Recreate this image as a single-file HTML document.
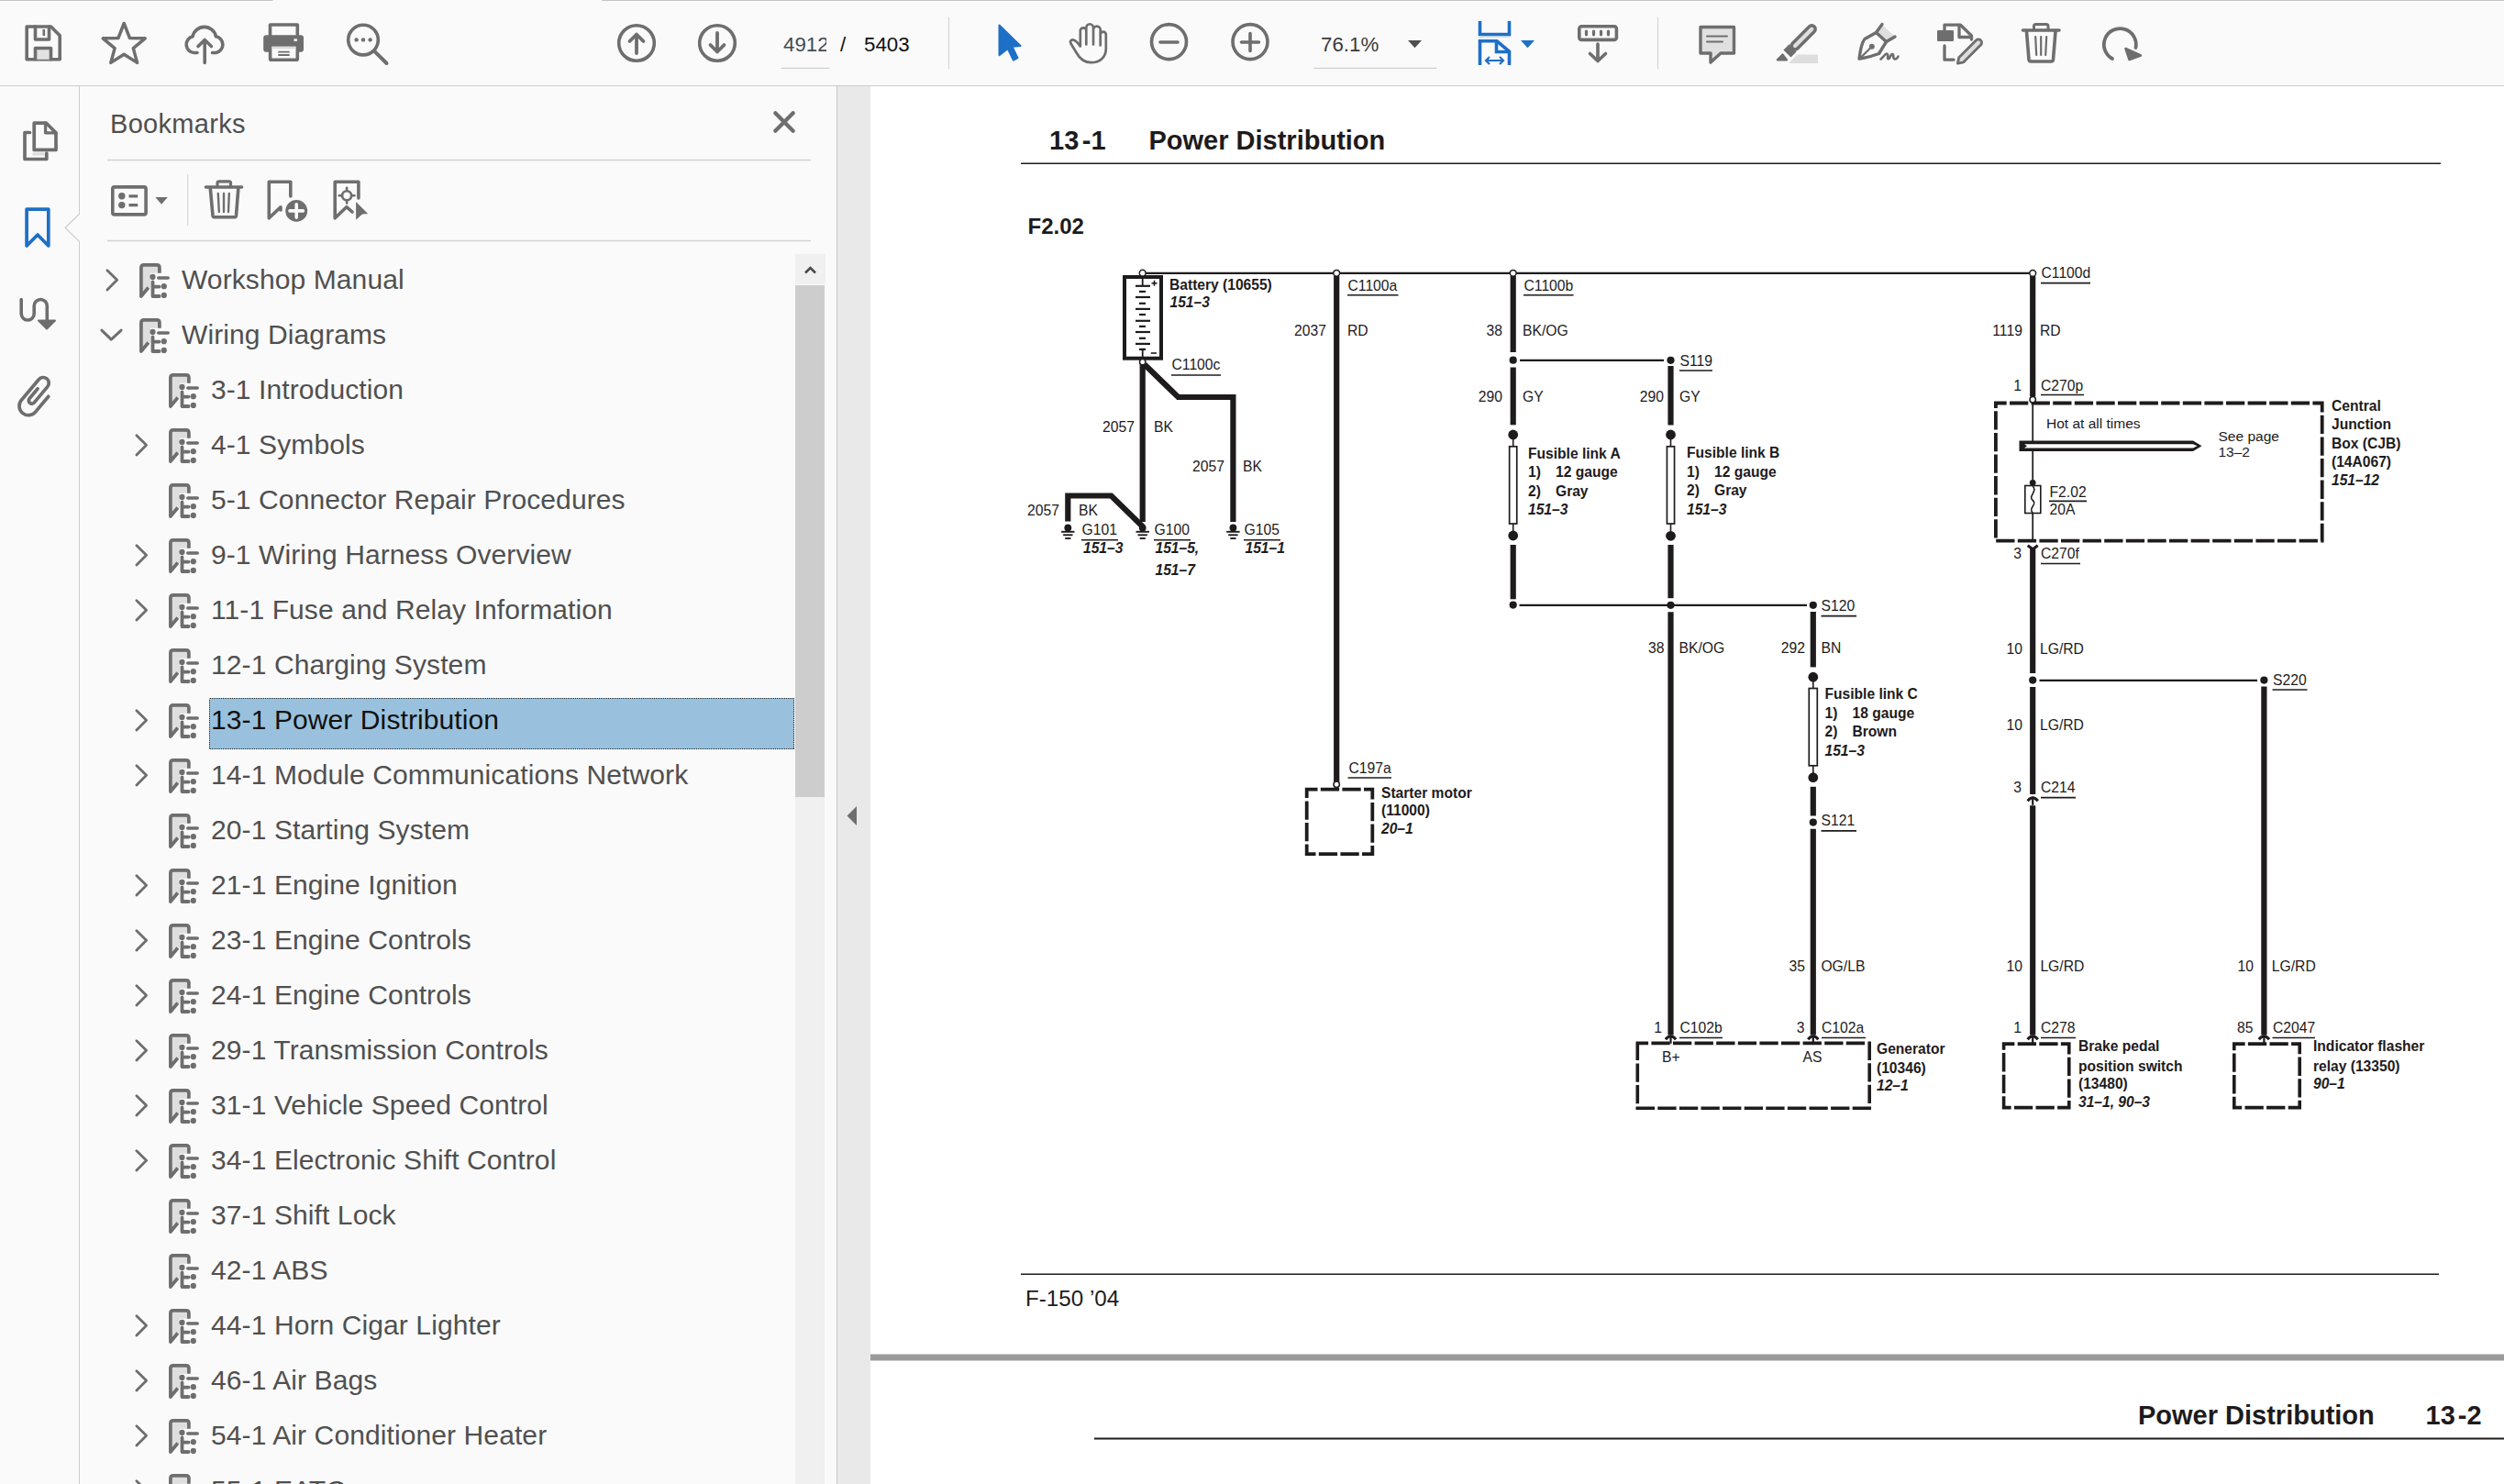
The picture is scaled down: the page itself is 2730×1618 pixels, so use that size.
<!DOCTYPE html>
<html><head><meta charset="utf-8">
<style>
html,body{margin:0;padding:0}
body{width:2730px;height:1618px;overflow:hidden;position:relative;background:#fff;font-family:"Liberation Sans",sans-serif}
.abs{position:absolute}
#tb{left:0;top:0;width:2730px;height:93px;background:#fafafa}
#tbline{left:0;top:93px;width:2730px;height:1px;background:#cdcdcd}
#rail{left:0;top:94px;width:86px;height:1524px;background:#fafafa}
#railb{left:86px;top:94px;width:1px;height:1524px;background:#cdcdcd}
#panel{left:87px;top:94px;width:825px;height:1524px;background:#fafafa;overflow:hidden}
#panelb{left:912px;top:94px;width:1px;height:1524px;background:#c9c9c9}
#gutter{left:913px;top:94px;width:36px;height:1524px;background:#e9e9e9}
.bm{position:absolute;font-size:29.5px;color:#4d4d4d;white-space:nowrap;line-height:1}
svg{position:absolute;left:0;top:0;overflow:visible}
</style></head>
<body>
<div id="tb" class="abs"></div>
<div id="tbline" class="abs"></div>
<div id="rail" class="abs"></div>
<div id="railb" class="abs"></div>
<div id="panel" class="abs"></div>
<div id="panelb" class="abs"></div>
<div id="gutter" class="abs"></div>
<svg width="2730" height="94" style="left:0;top:0">
<g fill="none" stroke="#6e6e6e" stroke-width="3.6" stroke-linejoin="round" stroke-linecap="round">
<!-- top window line -->
<line x1="0" y1="0.5" x2="297" y2="0.5" stroke="#c4c4c4" stroke-width="1.2"/>
<line x1="657" y1="0.5" x2="2730" y2="0.5" stroke="#c4c4c4" stroke-width="1.2"/>
<!-- save -->
<path d="M29.2,29 H55.5 L65.2,38.8 V64.8 H29.2 Z"/>
<path d="M38.5,29 V43 H53.5 V29" />
<rect x="46.5" y="32" width="2.6" height="7" fill="#6e6e6e" stroke="none"/>
<path d="M38.5,64.8 V52.5 H55.5 V64.8" fill="#e2e2e2"/>
<!-- star -->
<path d="M135.2,25.5 L141.5,41.6 L158.2,41.8 L145.3,52.6 L149.6,68.4 L135.2,59.2 L120.8,68.4 L125.1,52.6 L112.2,41.8 L128.9,41.6 Z" stroke-width="3.5"/>
<!-- cloud -->
<path d="M215,57.5 H211.5 A9,9 0 0 1 210,39.8 A13,13 0 0 1 235.5,39.8 A9,9 0 0 1 235.5,57.5 H231.5"/>
<path d="M223.2,68.5 V44 M216,50.5 L223.2,43.5 L230.4,50.5"/>
<!-- printer -->
<path d="M294.5,38 V27 H324.3 V38"/>
<rect x="287.2" y="38.2" width="43.8" height="18.6" rx="3" fill="#6e6e6e" stroke="none"/>
<rect x="320.5" y="42.3" width="3.4" height="2.6" fill="#fafafa" stroke="none"/>
<rect x="294.6" y="49" width="29.7" height="16.3" rx="1" fill="#fafafa"/>
<rect x="296.4" y="50.8" width="26.1" height="2.5" fill="#dcdcdc" stroke="none"/>
<path d="M304,56.7 H315 M304,60 H315" stroke-width="1.8"/>
<!-- search -->
<circle cx="396" cy="43.6" r="16.3"/>
<path d="M408,55.6 L421.5,69" stroke-width="4"/>
<circle cx="388.6" cy="43.4" r="2.2" fill="#6e6e6e" stroke="none"/>
<circle cx="396" cy="43.4" r="2.2" fill="#6e6e6e" stroke="none"/>
<circle cx="403.6" cy="43.4" r="2.2" fill="#6e6e6e" stroke="none"/>
<!-- up/down -->
<circle cx="694" cy="47" r="19.3"/>
<path d="M694,58 V37.5 M686.5,45 L694,37.5 L701.5,45" stroke-width="3.8"/>
<circle cx="782" cy="47" r="19.3"/>
<path d="M782,36 V56.5 M774.5,49 L782,56.5 L789.5,49" stroke-width="3.8"/>
<!-- separators -->
<line x1="1034.5" y1="19" x2="1034.5" y2="75" stroke="#d6d6d6" stroke-width="1.2"/>
<line x1="1807.5" y1="19" x2="1807.5" y2="75" stroke="#d6d6d6" stroke-width="1.2"/>
<!-- page field underline -->
<line x1="852" y1="74.3" x2="904" y2="74.3" stroke="#cfcfcf" stroke-width="1.2"/>
<line x1="1433" y1="74.3" x2="1566" y2="74.3" stroke="#cfcfcf" stroke-width="1.2"/>
<!-- select arrow -->
<path d="M1089.5,27.5 L1112.5,50 L1103.5,50.8 L1109.5,63.2 L1104.8,65.5 L1098.8,53 L1089.5,60.2 Z" fill="#1e6fc6" stroke="#1e6fc6" stroke-width="2"/>
<!-- hand -->
<path d="M1177.8,50.5 V33.6 A3.25,3.25 0 0 1 1184.3,33.6 V48.5 M1184.3,33.6 V30.1 A3.85,3.85 0 0 1 1192,30.1 V48.5 M1192,32.4 A3.85,3.85 0 0 1 1199.7,32.4 V49.5 M1199.7,37.7 A3.05,3.05 0 0 1 1205.8,37.7 V53 C1205.8,62.5 1199,68.2 1189.5,68.2 C1181,68.2 1176.5,63 1173,56.5 L1167.5,47.5 C1166,44.5 1168.5,42.5 1171.5,44 C1174,45.3 1176,48 1177.8,50.5" stroke-width="2.7"/>
<!-- zoom out/in -->
<circle cx="1274.5" cy="45.6" r="19"/>
<path d="M1265,46 H1284"/>
<circle cx="1363" cy="45.6" r="19"/>
<path d="M1353.5,46 H1372.5 M1363,36.5 V55.5"/>
<path d="M1535,44 H1550 L1542.5,52.3 Z" fill="#505050" stroke="none"/>
<!-- fit page icon (blue) -->
<g stroke="#1e6fc6" stroke-linecap="butt" stroke-linejoin="miter">
<path d="M1613.5,23 V37.5 H1645.5 V23"/>
<path d="M1613.5,71 V44.8 H1632 L1645.5,56 V71"/>
<path d="M1631.5,45 V56.5 H1645"/>
<path d="M1620,66 H1639 M1624,62 L1620,66 L1624,70 M1635,62 L1639,66 L1635,70" stroke-width="2.2"/>
</g>
<line x1="1613" y1="40" x2="1646" y2="40" stroke="#b9d3ee" stroke-width="1.5"/>
<path d="M1658,44 H1673 L1665.5,52.3 Z" fill="#1e6fc6" stroke="none"/>
<!-- scroll mode -->
<rect x="1721.8" y="28.8" width="40.6" height="14.6" rx="2.5"/>
<path d="M1729.5,34 V37.8 M1737.5,34 V37.8 M1745.5,34 V37.8 M1753.5,34 V37.8" stroke-width="3.2"/>
<path d="M1742,48 V66.5 M1733.5,58.5 L1742,66.5 L1750.5,58.5"/>
<!-- comment -->
<path d="M1854,29.5 H1890.5 V58 H1876 L1865,68 V58 H1854 Z" fill="#e0e0e0" stroke-width="3.4"/>
<path d="M1861,39.6 H1883 M1861,45.6 H1878" stroke-width="2"/>
<!-- highlighter -->
<path d="M1950,69 L1959.5,59.5 H1982 V69 Z" fill="#dedede" stroke="none"/>
<g transform="translate(1966,41) rotate(-45)">
<rect x="-16.5" y="-3.9" width="33.5" height="7.8" rx="3.9" fill="#dedede" stroke-width="3.5"/>
<path d="M-16,-5.7 H-24.8 V5.7 H-16 Z" fill="#6e6e6e" stroke="none"/>
</g>
<path d="M1937.8,65.3 L1943.5,59.5 L1948,65.3 Z" fill="#6e6e6e" stroke-width="2.2"/>
<!-- pen sign -->
<path d="M2046,35.5 L2052,27 L2066,40 L2056.5,44.5 Z" fill="#dedede" stroke="none"/>
<path d="M2052,26.5 L2045.5,35.5 L2056.5,45.5 L2066,40" stroke-width="3.4"/>
<path d="M2045.5,35.5 L2033,42.5 C2030,46 2028,56 2027,64 C2035,63 2043,60.5 2048.5,58.5 L2056.5,45.5" stroke-width="3.4"/>
<path d="M2028.5,63 L2040.5,51" stroke-width="2.2"/>
<circle cx="2040.8" cy="50.8" r="3" fill="#6e6e6e" stroke="none"/>
<path d="M2050.5,64.5 C2053,62 2055.5,59 2057,58.5 C2058.5,58.5 2058.5,61 2058,63 C2058,65 2059.5,64.5 2060.5,62.5 C2061.5,60 2063,58 2064,59.5 C2064.5,61 2063.5,64 2066,64.5 C2067.5,64.5 2069,62.5 2069.5,61.5" stroke-width="2.6"/>
<!-- edit doc -->
<path d="M2120,33.5 V27.2 H2137.5 L2149.5,39 V43" stroke-width="3.3"/>
<path d="M2136,27.5 V40.5 H2149" stroke-width="3.3"/>
<path d="M2120,50 V65.2 H2130" stroke-width="3.3"/>
<rect x="2112" y="33" width="18" height="12" fill="#6e6e6e" stroke="none" rx="1.2"/>
<g transform="translate(2146,57.5) rotate(-45)">
<path d="M-11,-3.6 H15.5 A3.6,3.6 0 0 1 15.5,3.6 H-11 L-16.5,0 Z" fill="#dedede" stroke-width="2.8"/>
</g>
<!-- trash -->
<path d="M2205.5,33 H2245" stroke-width="3.6"/>
<path d="M2217.5,32 V28.5 C2217.5,27 2218.5,26.5 2219.5,26.5 H2231 C2232,26.5 2233,27 2233,28.5 V32" stroke-width="3"/>
<path d="M2209.5,34.5 L2212,65 C2212.2,66.5 2213,67 2214.5,67 H2236 C2237.5,67 2238.3,66.5 2238.5,65 L2241,34.5" stroke-width="3.6"/>
<path d="M2219.2,40 L2220.2,60 M2225.2,40 V60 M2231.2,40 L2230.2,60" stroke-width="2.2"/>
<!-- rotate -->
<path d="M2303,64 A17.5,17.5 0 1 1 2328.5,52" stroke-width="3.8"/>
<path d="M2317.5,53 L2334,60.5 L2321.5,65 Z" fill="#6e6e6e" stroke-width="2.5"/>
</g>
</svg>
<div class="abs" style="left:854px;top:34px;width:47px;overflow:hidden;font-size:22.3px;color:#434b55;white-space:nowrap;line-height:30px">4912</div>
<div class="abs" style="left:916px;top:34px;font-size:22.3px;color:#111;line-height:30px">/</div>
<div class="abs" style="left:942px;top:34px;font-size:22.3px;color:#111;line-height:30px">5403</div>
<div class="abs" style="left:1440px;top:34px;font-size:22.3px;color:#3a3a3a;line-height:30px">76.1%</div>

<!--SIDEBAR-->
<svg width="2730" height="1618" style="left:0;top:0">
<defs><clipPath id="pc"><rect x="87" y="265" width="778" height="1353"/></clipPath></defs>
<g fill="none" stroke="#6e6e6e" stroke-width="3.7" stroke-linecap="round" stroke-linejoin="round">
<!-- pages -->
<path d="M32.5,144.5 H27 V173.5 H50.8 V167" />
<path d="M37.2,134.2 H50.5 L61,144.8 V163.4 H37.2 Z" />
<path d="M49.6,134.5 V144.8 H60.8" stroke-width="3.3"/>
<rect x="35.5" y="166.3" width="13" height="3.2" fill="#dcdcdc" stroke="none"/>
<!-- bookmark blue -->
<path d="M29.1,228.1 H52.8 V268 L41,256 L29.1,268 Z" stroke="#1f6fc6" stroke-width="3.7"/>
<!-- link -->
<path d="M23.2,326.5 V342 A7,7 0 0 0 37.2,342 V333.5 A7.05,7.05 0 0 1 51.3,333.5 V350" stroke-width="3.6"/>
<path d="M42,349.5 H60 L51,358.5 Z" fill="#6e6e6e" stroke-width="2"/>
<!-- paperclip -->
<g transform="rotate(40 40 432)">
<path d="M50,424 V446 A10,10 0 0 1 30,446 V416.5 A6.2,6.2 0 0 1 42.4,416.5 V439 A3.4,3.4 0 0 1 35.6,439 V425" stroke-width="3.7"/>
</g>

</g>
<path d="M86.5,233.2 L71,248.3 L86.5,263.4" fill="#fafafa" stroke="#cdcdcd" stroke-width="1.2"/>
<rect x="86" y="234.5" width="2" height="28" fill="#fafafa"/>
<text x="120" y="144.6" font-size="29" letter-spacing="0.3" fill="#4f4f4f">Bookmarks</text>
<path d="M845.3,123.3 L864.7,142.7 M864.7,123.3 L845.3,142.7" stroke="#6e6e6e" stroke-width="4.3" stroke-linecap="round"/>
<line x1="117" y1="174.5" x2="884" y2="174.5" stroke="#d2d2d2" stroke-width="1.3"/>
<line x1="117" y1="262.5" x2="884" y2="262.5" stroke="#d2d2d2" stroke-width="1.3"/>
<line x1="204.6" y1="190" x2="204.6" y2="246" stroke="#d8d8d8" stroke-width="1.2"/>
<g fill="none" stroke="#6e6e6e" stroke-width="3.6" stroke-linecap="round" stroke-linejoin="round">
<rect x="122.8" y="203.9" width="36.3" height="30" rx="2"/>
<circle cx="132.8" cy="213.8" r="3.7" fill="#6e6e6e" stroke="none"/>
<circle cx="132.8" cy="223.6" r="3.7" fill="#6e6e6e" stroke="none"/>
<path d="M140.5,213.8 H150.2 M140.5,223.6 H150.2" stroke-width="3.3" stroke-linecap="butt"/>
<path d="M169.3,215 H182.8 L176.1,222.7 Z" fill="#6e6e6e" stroke="none"/>
<!-- trash -->
<path d="M224.5,204 H263.5"/>
<path d="M237,203 V199.5 C237,198.3 237.8,197.8 239,197.8 H249.5 C250.7,197.8 251.5,198.3 251.5,199.5 V203" stroke-width="3.2"/>
<path d="M229.3,205.5 L232,235 C232.2,236.5 233,236.8 234.5,236.8 H255 C256.5,236.8 257.3,236.5 257.5,235 L259.8,205.5"/>
<path d="M237.8,211 L238.8,231 M244,211 V231 M249.8,211 L249,231" stroke-width="2.4"/>
<!-- bookmark plus -->
<path d="M306,229 V225.7 L293.3,237.8 V198.2 H316.8 V214" />
<circle cx="323.2" cy="229.9" r="13" fill="#6e6e6e" stroke="#fafafa" stroke-width="2.2"/>
<path d="M316,229.9 H330.4 M323.2,222.7 V237.1" stroke="#fafafa" stroke-width="3.6"/>
<!-- bookmark target -->
<path d="M384,231 L377.8,225.7 L365.2,237.8 V198.2 H390.9 V216" />
<circle cx="378.1" cy="213.2" r="5" stroke-width="2.6"/>
<path d="M378.1,204.8 V207 M378.1,219.4 V221.6 M369.7,213.2 H371.9 M384.3,213.2 H386.5" stroke-width="2.6"/>
<path d="M387.5,218.5 L402.5,233.5 L395.5,234 L387.5,241 Z" fill="#6e6e6e" stroke="#fafafa" stroke-width="1.2"/>

</g>
<rect x="228" y="761" width="638" height="56" fill="#99c1dd"/><rect x="228.5" y="761.5" width="637" height="55" fill="none" stroke="#2a2a2a" stroke-width="1" stroke-dasharray="1,1" shape-rendering="crispEdges"/>
<g clip-path="url(#pc)">
<path d="M116.9,294.8 L127.6,305.2 L116.9,316.0" fill="none" stroke="#6e6e6e" stroke-width="2.8" stroke-linecap="round" stroke-linejoin="round"/>
<g transform="translate(0,314.3)"><path d="M154,8.5 V-25.3 H173.9 V-16.5 H164 V-1 Z" fill="#dedede" stroke="none"/><path d="M161.8,-0.8 L153.9,8.7 V-22.5 Q153.9,-25.4 156.8,-25.4 H171 Q173.9,-25.4 173.9,-22.5 V-16.6" fill="none" stroke="#6e6e6e" stroke-width="3.7" stroke-linejoin="round"/><circle cx="166.5" cy="-12.4" r="3.1" fill="#6e6e6e"/><path d="M172.8,-11.3 H183.2" stroke="#6e6e6e" stroke-width="3.6" stroke-linecap="round"/><path d="M166.5,-7 V8.7 H173.6 M166.5,-1.7 H173.6" fill="none" stroke="#6e6e6e" stroke-width="3.8" stroke-linecap="round" stroke-linejoin="round"/><circle cx="178.8" cy="-2.1" r="3.1" fill="#6e6e6e"/><circle cx="178.8" cy="7.6" r="3.1" fill="#6e6e6e"/></g>
<text x="198" y="315.1" font-size="30" letter-spacing="0.1" fill="#505050">Workshop Manual</text>
<path d="M110.9,360.1 L121.3,370.1 L132.1,360.1" fill="none" stroke="#6e6e6e" stroke-width="3" stroke-linecap="round" stroke-linejoin="round"/>
<g transform="translate(0,374.3)"><path d="M154,8.5 V-25.3 H173.9 V-16.5 H164 V-1 Z" fill="#dedede" stroke="none"/><path d="M161.8,-0.8 L153.9,8.7 V-22.5 Q153.9,-25.4 156.8,-25.4 H171 Q173.9,-25.4 173.9,-22.5 V-16.6" fill="none" stroke="#6e6e6e" stroke-width="3.7" stroke-linejoin="round"/><circle cx="166.5" cy="-12.4" r="3.1" fill="#6e6e6e"/><path d="M172.8,-11.3 H183.2" stroke="#6e6e6e" stroke-width="3.6" stroke-linecap="round"/><path d="M166.5,-7 V8.7 H173.6 M166.5,-1.7 H173.6" fill="none" stroke="#6e6e6e" stroke-width="3.8" stroke-linecap="round" stroke-linejoin="round"/><circle cx="178.8" cy="-2.1" r="3.1" fill="#6e6e6e"/><circle cx="178.8" cy="7.6" r="3.1" fill="#6e6e6e"/></g>
<text x="198" y="375.1" font-size="30" letter-spacing="0.1" fill="#505050">Wiring Diagrams</text>
<g transform="translate(32,434.3)"><path d="M154,8.5 V-25.3 H173.9 V-16.5 H164 V-1 Z" fill="#dedede" stroke="none"/><path d="M161.8,-0.8 L153.9,8.7 V-22.5 Q153.9,-25.4 156.8,-25.4 H171 Q173.9,-25.4 173.9,-22.5 V-16.6" fill="none" stroke="#6e6e6e" stroke-width="3.7" stroke-linejoin="round"/><circle cx="166.5" cy="-12.4" r="3.1" fill="#6e6e6e"/><path d="M172.8,-11.3 H183.2" stroke="#6e6e6e" stroke-width="3.6" stroke-linecap="round"/><path d="M166.5,-7 V8.7 H173.6 M166.5,-1.7 H173.6" fill="none" stroke="#6e6e6e" stroke-width="3.8" stroke-linecap="round" stroke-linejoin="round"/><circle cx="178.8" cy="-2.1" r="3.1" fill="#6e6e6e"/><circle cx="178.8" cy="7.6" r="3.1" fill="#6e6e6e"/></g>
<text x="230" y="435.1" font-size="30" letter-spacing="0.1" fill="#505050">3-1 Introduction</text>
<path d="M148.9,474.8 L159.6,485.2 L148.9,496.0" fill="none" stroke="#6e6e6e" stroke-width="2.8" stroke-linecap="round" stroke-linejoin="round"/>
<g transform="translate(32,494.3)"><path d="M154,8.5 V-25.3 H173.9 V-16.5 H164 V-1 Z" fill="#dedede" stroke="none"/><path d="M161.8,-0.8 L153.9,8.7 V-22.5 Q153.9,-25.4 156.8,-25.4 H171 Q173.9,-25.4 173.9,-22.5 V-16.6" fill="none" stroke="#6e6e6e" stroke-width="3.7" stroke-linejoin="round"/><circle cx="166.5" cy="-12.4" r="3.1" fill="#6e6e6e"/><path d="M172.8,-11.3 H183.2" stroke="#6e6e6e" stroke-width="3.6" stroke-linecap="round"/><path d="M166.5,-7 V8.7 H173.6 M166.5,-1.7 H173.6" fill="none" stroke="#6e6e6e" stroke-width="3.8" stroke-linecap="round" stroke-linejoin="round"/><circle cx="178.8" cy="-2.1" r="3.1" fill="#6e6e6e"/><circle cx="178.8" cy="7.6" r="3.1" fill="#6e6e6e"/></g>
<text x="230" y="495.1" font-size="30" letter-spacing="0.1" fill="#505050">4-1 Symbols</text>
<g transform="translate(32,554.3)"><path d="M154,8.5 V-25.3 H173.9 V-16.5 H164 V-1 Z" fill="#dedede" stroke="none"/><path d="M161.8,-0.8 L153.9,8.7 V-22.5 Q153.9,-25.4 156.8,-25.4 H171 Q173.9,-25.4 173.9,-22.5 V-16.6" fill="none" stroke="#6e6e6e" stroke-width="3.7" stroke-linejoin="round"/><circle cx="166.5" cy="-12.4" r="3.1" fill="#6e6e6e"/><path d="M172.8,-11.3 H183.2" stroke="#6e6e6e" stroke-width="3.6" stroke-linecap="round"/><path d="M166.5,-7 V8.7 H173.6 M166.5,-1.7 H173.6" fill="none" stroke="#6e6e6e" stroke-width="3.8" stroke-linecap="round" stroke-linejoin="round"/><circle cx="178.8" cy="-2.1" r="3.1" fill="#6e6e6e"/><circle cx="178.8" cy="7.6" r="3.1" fill="#6e6e6e"/></g>
<text x="230" y="555.1" font-size="30" letter-spacing="0.1" fill="#505050">5-1 Connector Repair Procedures</text>
<path d="M148.9,594.8 L159.6,605.2 L148.9,616.0" fill="none" stroke="#6e6e6e" stroke-width="2.8" stroke-linecap="round" stroke-linejoin="round"/>
<g transform="translate(32,614.3)"><path d="M154,8.5 V-25.3 H173.9 V-16.5 H164 V-1 Z" fill="#dedede" stroke="none"/><path d="M161.8,-0.8 L153.9,8.7 V-22.5 Q153.9,-25.4 156.8,-25.4 H171 Q173.9,-25.4 173.9,-22.5 V-16.6" fill="none" stroke="#6e6e6e" stroke-width="3.7" stroke-linejoin="round"/><circle cx="166.5" cy="-12.4" r="3.1" fill="#6e6e6e"/><path d="M172.8,-11.3 H183.2" stroke="#6e6e6e" stroke-width="3.6" stroke-linecap="round"/><path d="M166.5,-7 V8.7 H173.6 M166.5,-1.7 H173.6" fill="none" stroke="#6e6e6e" stroke-width="3.8" stroke-linecap="round" stroke-linejoin="round"/><circle cx="178.8" cy="-2.1" r="3.1" fill="#6e6e6e"/><circle cx="178.8" cy="7.6" r="3.1" fill="#6e6e6e"/></g>
<text x="230" y="615.1" font-size="30" letter-spacing="0.1" fill="#505050">9-1 Wiring Harness Overview</text>
<path d="M148.9,654.8 L159.6,665.2 L148.9,676.0" fill="none" stroke="#6e6e6e" stroke-width="2.8" stroke-linecap="round" stroke-linejoin="round"/>
<g transform="translate(32,674.3)"><path d="M154,8.5 V-25.3 H173.9 V-16.5 H164 V-1 Z" fill="#dedede" stroke="none"/><path d="M161.8,-0.8 L153.9,8.7 V-22.5 Q153.9,-25.4 156.8,-25.4 H171 Q173.9,-25.4 173.9,-22.5 V-16.6" fill="none" stroke="#6e6e6e" stroke-width="3.7" stroke-linejoin="round"/><circle cx="166.5" cy="-12.4" r="3.1" fill="#6e6e6e"/><path d="M172.8,-11.3 H183.2" stroke="#6e6e6e" stroke-width="3.6" stroke-linecap="round"/><path d="M166.5,-7 V8.7 H173.6 M166.5,-1.7 H173.6" fill="none" stroke="#6e6e6e" stroke-width="3.8" stroke-linecap="round" stroke-linejoin="round"/><circle cx="178.8" cy="-2.1" r="3.1" fill="#6e6e6e"/><circle cx="178.8" cy="7.6" r="3.1" fill="#6e6e6e"/></g>
<text x="230" y="675.1" font-size="30" letter-spacing="0.1" fill="#505050">11-1 Fuse and Relay Information</text>
<g transform="translate(32,734.3)"><path d="M154,8.5 V-25.3 H173.9 V-16.5 H164 V-1 Z" fill="#dedede" stroke="none"/><path d="M161.8,-0.8 L153.9,8.7 V-22.5 Q153.9,-25.4 156.8,-25.4 H171 Q173.9,-25.4 173.9,-22.5 V-16.6" fill="none" stroke="#6e6e6e" stroke-width="3.7" stroke-linejoin="round"/><circle cx="166.5" cy="-12.4" r="3.1" fill="#6e6e6e"/><path d="M172.8,-11.3 H183.2" stroke="#6e6e6e" stroke-width="3.6" stroke-linecap="round"/><path d="M166.5,-7 V8.7 H173.6 M166.5,-1.7 H173.6" fill="none" stroke="#6e6e6e" stroke-width="3.8" stroke-linecap="round" stroke-linejoin="round"/><circle cx="178.8" cy="-2.1" r="3.1" fill="#6e6e6e"/><circle cx="178.8" cy="7.6" r="3.1" fill="#6e6e6e"/></g>
<text x="230" y="735.1" font-size="30" letter-spacing="0.1" fill="#505050">12-1 Charging System</text>
<path d="M148.9,774.8 L159.6,785.2 L148.9,796.0" fill="none" stroke="#6e6e6e" stroke-width="2.8" stroke-linecap="round" stroke-linejoin="round"/>
<g transform="translate(32,794.3)"><path d="M154,8.5 V-25.3 H173.9 V-16.5 H164 V-1 Z" fill="#dedede" stroke="none"/><path d="M161.8,-0.8 L153.9,8.7 V-22.5 Q153.9,-25.4 156.8,-25.4 H171 Q173.9,-25.4 173.9,-22.5 V-16.6" fill="none" stroke="#6e6e6e" stroke-width="3.7" stroke-linejoin="round"/><circle cx="166.5" cy="-12.4" r="3.1" fill="#6e6e6e"/><path d="M172.8,-11.3 H183.2" stroke="#6e6e6e" stroke-width="3.6" stroke-linecap="round"/><path d="M166.5,-7 V8.7 H173.6 M166.5,-1.7 H173.6" fill="none" stroke="#6e6e6e" stroke-width="3.8" stroke-linecap="round" stroke-linejoin="round"/><circle cx="178.8" cy="-2.1" r="3.1" fill="#6e6e6e"/><circle cx="178.8" cy="7.6" r="3.1" fill="#6e6e6e"/></g>
<text x="230" y="795.1" font-size="30" letter-spacing="0.1" fill="#111">13-1 Power Distribution</text>
<path d="M148.9,834.8 L159.6,845.2 L148.9,856.0" fill="none" stroke="#6e6e6e" stroke-width="2.8" stroke-linecap="round" stroke-linejoin="round"/>
<g transform="translate(32,854.3)"><path d="M154,8.5 V-25.3 H173.9 V-16.5 H164 V-1 Z" fill="#dedede" stroke="none"/><path d="M161.8,-0.8 L153.9,8.7 V-22.5 Q153.9,-25.4 156.8,-25.4 H171 Q173.9,-25.4 173.9,-22.5 V-16.6" fill="none" stroke="#6e6e6e" stroke-width="3.7" stroke-linejoin="round"/><circle cx="166.5" cy="-12.4" r="3.1" fill="#6e6e6e"/><path d="M172.8,-11.3 H183.2" stroke="#6e6e6e" stroke-width="3.6" stroke-linecap="round"/><path d="M166.5,-7 V8.7 H173.6 M166.5,-1.7 H173.6" fill="none" stroke="#6e6e6e" stroke-width="3.8" stroke-linecap="round" stroke-linejoin="round"/><circle cx="178.8" cy="-2.1" r="3.1" fill="#6e6e6e"/><circle cx="178.8" cy="7.6" r="3.1" fill="#6e6e6e"/></g>
<text x="230" y="855.1" font-size="30" letter-spacing="0.1" fill="#505050">14-1 Module Communications Network</text>
<g transform="translate(32,914.3)"><path d="M154,8.5 V-25.3 H173.9 V-16.5 H164 V-1 Z" fill="#dedede" stroke="none"/><path d="M161.8,-0.8 L153.9,8.7 V-22.5 Q153.9,-25.4 156.8,-25.4 H171 Q173.9,-25.4 173.9,-22.5 V-16.6" fill="none" stroke="#6e6e6e" stroke-width="3.7" stroke-linejoin="round"/><circle cx="166.5" cy="-12.4" r="3.1" fill="#6e6e6e"/><path d="M172.8,-11.3 H183.2" stroke="#6e6e6e" stroke-width="3.6" stroke-linecap="round"/><path d="M166.5,-7 V8.7 H173.6 M166.5,-1.7 H173.6" fill="none" stroke="#6e6e6e" stroke-width="3.8" stroke-linecap="round" stroke-linejoin="round"/><circle cx="178.8" cy="-2.1" r="3.1" fill="#6e6e6e"/><circle cx="178.8" cy="7.6" r="3.1" fill="#6e6e6e"/></g>
<text x="230" y="915.1" font-size="30" letter-spacing="0.1" fill="#505050">20-1 Starting System</text>
<path d="M148.9,954.8 L159.6,965.2 L148.9,976.0" fill="none" stroke="#6e6e6e" stroke-width="2.8" stroke-linecap="round" stroke-linejoin="round"/>
<g transform="translate(32,974.3)"><path d="M154,8.5 V-25.3 H173.9 V-16.5 H164 V-1 Z" fill="#dedede" stroke="none"/><path d="M161.8,-0.8 L153.9,8.7 V-22.5 Q153.9,-25.4 156.8,-25.4 H171 Q173.9,-25.4 173.9,-22.5 V-16.6" fill="none" stroke="#6e6e6e" stroke-width="3.7" stroke-linejoin="round"/><circle cx="166.5" cy="-12.4" r="3.1" fill="#6e6e6e"/><path d="M172.8,-11.3 H183.2" stroke="#6e6e6e" stroke-width="3.6" stroke-linecap="round"/><path d="M166.5,-7 V8.7 H173.6 M166.5,-1.7 H173.6" fill="none" stroke="#6e6e6e" stroke-width="3.8" stroke-linecap="round" stroke-linejoin="round"/><circle cx="178.8" cy="-2.1" r="3.1" fill="#6e6e6e"/><circle cx="178.8" cy="7.6" r="3.1" fill="#6e6e6e"/></g>
<text x="230" y="975.1" font-size="30" letter-spacing="0.1" fill="#505050">21-1 Engine Ignition</text>
<path d="M148.9,1014.8 L159.6,1025.2 L148.9,1036.0" fill="none" stroke="#6e6e6e" stroke-width="2.8" stroke-linecap="round" stroke-linejoin="round"/>
<g transform="translate(32,1034.3)"><path d="M154,8.5 V-25.3 H173.9 V-16.5 H164 V-1 Z" fill="#dedede" stroke="none"/><path d="M161.8,-0.8 L153.9,8.7 V-22.5 Q153.9,-25.4 156.8,-25.4 H171 Q173.9,-25.4 173.9,-22.5 V-16.6" fill="none" stroke="#6e6e6e" stroke-width="3.7" stroke-linejoin="round"/><circle cx="166.5" cy="-12.4" r="3.1" fill="#6e6e6e"/><path d="M172.8,-11.3 H183.2" stroke="#6e6e6e" stroke-width="3.6" stroke-linecap="round"/><path d="M166.5,-7 V8.7 H173.6 M166.5,-1.7 H173.6" fill="none" stroke="#6e6e6e" stroke-width="3.8" stroke-linecap="round" stroke-linejoin="round"/><circle cx="178.8" cy="-2.1" r="3.1" fill="#6e6e6e"/><circle cx="178.8" cy="7.6" r="3.1" fill="#6e6e6e"/></g>
<text x="230" y="1035.1" font-size="30" letter-spacing="0.1" fill="#505050">23-1 Engine Controls</text>
<path d="M148.9,1074.8 L159.6,1085.2 L148.9,1096.0" fill="none" stroke="#6e6e6e" stroke-width="2.8" stroke-linecap="round" stroke-linejoin="round"/>
<g transform="translate(32,1094.3)"><path d="M154,8.5 V-25.3 H173.9 V-16.5 H164 V-1 Z" fill="#dedede" stroke="none"/><path d="M161.8,-0.8 L153.9,8.7 V-22.5 Q153.9,-25.4 156.8,-25.4 H171 Q173.9,-25.4 173.9,-22.5 V-16.6" fill="none" stroke="#6e6e6e" stroke-width="3.7" stroke-linejoin="round"/><circle cx="166.5" cy="-12.4" r="3.1" fill="#6e6e6e"/><path d="M172.8,-11.3 H183.2" stroke="#6e6e6e" stroke-width="3.6" stroke-linecap="round"/><path d="M166.5,-7 V8.7 H173.6 M166.5,-1.7 H173.6" fill="none" stroke="#6e6e6e" stroke-width="3.8" stroke-linecap="round" stroke-linejoin="round"/><circle cx="178.8" cy="-2.1" r="3.1" fill="#6e6e6e"/><circle cx="178.8" cy="7.6" r="3.1" fill="#6e6e6e"/></g>
<text x="230" y="1095.1" font-size="30" letter-spacing="0.1" fill="#505050">24-1 Engine Controls</text>
<path d="M148.9,1134.8 L159.6,1145.2 L148.9,1156.0" fill="none" stroke="#6e6e6e" stroke-width="2.8" stroke-linecap="round" stroke-linejoin="round"/>
<g transform="translate(32,1154.3)"><path d="M154,8.5 V-25.3 H173.9 V-16.5 H164 V-1 Z" fill="#dedede" stroke="none"/><path d="M161.8,-0.8 L153.9,8.7 V-22.5 Q153.9,-25.4 156.8,-25.4 H171 Q173.9,-25.4 173.9,-22.5 V-16.6" fill="none" stroke="#6e6e6e" stroke-width="3.7" stroke-linejoin="round"/><circle cx="166.5" cy="-12.4" r="3.1" fill="#6e6e6e"/><path d="M172.8,-11.3 H183.2" stroke="#6e6e6e" stroke-width="3.6" stroke-linecap="round"/><path d="M166.5,-7 V8.7 H173.6 M166.5,-1.7 H173.6" fill="none" stroke="#6e6e6e" stroke-width="3.8" stroke-linecap="round" stroke-linejoin="round"/><circle cx="178.8" cy="-2.1" r="3.1" fill="#6e6e6e"/><circle cx="178.8" cy="7.6" r="3.1" fill="#6e6e6e"/></g>
<text x="230" y="1155.1" font-size="30" letter-spacing="0.1" fill="#505050">29-1 Transmission Controls</text>
<path d="M148.9,1194.8 L159.6,1205.2 L148.9,1216.0" fill="none" stroke="#6e6e6e" stroke-width="2.8" stroke-linecap="round" stroke-linejoin="round"/>
<g transform="translate(32,1214.3)"><path d="M154,8.5 V-25.3 H173.9 V-16.5 H164 V-1 Z" fill="#dedede" stroke="none"/><path d="M161.8,-0.8 L153.9,8.7 V-22.5 Q153.9,-25.4 156.8,-25.4 H171 Q173.9,-25.4 173.9,-22.5 V-16.6" fill="none" stroke="#6e6e6e" stroke-width="3.7" stroke-linejoin="round"/><circle cx="166.5" cy="-12.4" r="3.1" fill="#6e6e6e"/><path d="M172.8,-11.3 H183.2" stroke="#6e6e6e" stroke-width="3.6" stroke-linecap="round"/><path d="M166.5,-7 V8.7 H173.6 M166.5,-1.7 H173.6" fill="none" stroke="#6e6e6e" stroke-width="3.8" stroke-linecap="round" stroke-linejoin="round"/><circle cx="178.8" cy="-2.1" r="3.1" fill="#6e6e6e"/><circle cx="178.8" cy="7.6" r="3.1" fill="#6e6e6e"/></g>
<text x="230" y="1215.1" font-size="30" letter-spacing="0.1" fill="#505050">31-1 Vehicle Speed Control</text>
<path d="M148.9,1254.8 L159.6,1265.2 L148.9,1276.0" fill="none" stroke="#6e6e6e" stroke-width="2.8" stroke-linecap="round" stroke-linejoin="round"/>
<g transform="translate(32,1274.3)"><path d="M154,8.5 V-25.3 H173.9 V-16.5 H164 V-1 Z" fill="#dedede" stroke="none"/><path d="M161.8,-0.8 L153.9,8.7 V-22.5 Q153.9,-25.4 156.8,-25.4 H171 Q173.9,-25.4 173.9,-22.5 V-16.6" fill="none" stroke="#6e6e6e" stroke-width="3.7" stroke-linejoin="round"/><circle cx="166.5" cy="-12.4" r="3.1" fill="#6e6e6e"/><path d="M172.8,-11.3 H183.2" stroke="#6e6e6e" stroke-width="3.6" stroke-linecap="round"/><path d="M166.5,-7 V8.7 H173.6 M166.5,-1.7 H173.6" fill="none" stroke="#6e6e6e" stroke-width="3.8" stroke-linecap="round" stroke-linejoin="round"/><circle cx="178.8" cy="-2.1" r="3.1" fill="#6e6e6e"/><circle cx="178.8" cy="7.6" r="3.1" fill="#6e6e6e"/></g>
<text x="230" y="1275.1" font-size="30" letter-spacing="0.1" fill="#505050">34-1 Electronic Shift Control</text>
<g transform="translate(32,1334.3)"><path d="M154,8.5 V-25.3 H173.9 V-16.5 H164 V-1 Z" fill="#dedede" stroke="none"/><path d="M161.8,-0.8 L153.9,8.7 V-22.5 Q153.9,-25.4 156.8,-25.4 H171 Q173.9,-25.4 173.9,-22.5 V-16.6" fill="none" stroke="#6e6e6e" stroke-width="3.7" stroke-linejoin="round"/><circle cx="166.5" cy="-12.4" r="3.1" fill="#6e6e6e"/><path d="M172.8,-11.3 H183.2" stroke="#6e6e6e" stroke-width="3.6" stroke-linecap="round"/><path d="M166.5,-7 V8.7 H173.6 M166.5,-1.7 H173.6" fill="none" stroke="#6e6e6e" stroke-width="3.8" stroke-linecap="round" stroke-linejoin="round"/><circle cx="178.8" cy="-2.1" r="3.1" fill="#6e6e6e"/><circle cx="178.8" cy="7.6" r="3.1" fill="#6e6e6e"/></g>
<text x="230" y="1335.1" font-size="30" letter-spacing="0.1" fill="#505050">37-1 Shift Lock</text>
<g transform="translate(32,1394.3)"><path d="M154,8.5 V-25.3 H173.9 V-16.5 H164 V-1 Z" fill="#dedede" stroke="none"/><path d="M161.8,-0.8 L153.9,8.7 V-22.5 Q153.9,-25.4 156.8,-25.4 H171 Q173.9,-25.4 173.9,-22.5 V-16.6" fill="none" stroke="#6e6e6e" stroke-width="3.7" stroke-linejoin="round"/><circle cx="166.5" cy="-12.4" r="3.1" fill="#6e6e6e"/><path d="M172.8,-11.3 H183.2" stroke="#6e6e6e" stroke-width="3.6" stroke-linecap="round"/><path d="M166.5,-7 V8.7 H173.6 M166.5,-1.7 H173.6" fill="none" stroke="#6e6e6e" stroke-width="3.8" stroke-linecap="round" stroke-linejoin="round"/><circle cx="178.8" cy="-2.1" r="3.1" fill="#6e6e6e"/><circle cx="178.8" cy="7.6" r="3.1" fill="#6e6e6e"/></g>
<text x="230" y="1395.1" font-size="30" letter-spacing="0.1" fill="#505050">42-1 ABS</text>
<path d="M148.9,1434.8 L159.6,1445.2 L148.9,1456.0" fill="none" stroke="#6e6e6e" stroke-width="2.8" stroke-linecap="round" stroke-linejoin="round"/>
<g transform="translate(32,1454.3)"><path d="M154,8.5 V-25.3 H173.9 V-16.5 H164 V-1 Z" fill="#dedede" stroke="none"/><path d="M161.8,-0.8 L153.9,8.7 V-22.5 Q153.9,-25.4 156.8,-25.4 H171 Q173.9,-25.4 173.9,-22.5 V-16.6" fill="none" stroke="#6e6e6e" stroke-width="3.7" stroke-linejoin="round"/><circle cx="166.5" cy="-12.4" r="3.1" fill="#6e6e6e"/><path d="M172.8,-11.3 H183.2" stroke="#6e6e6e" stroke-width="3.6" stroke-linecap="round"/><path d="M166.5,-7 V8.7 H173.6 M166.5,-1.7 H173.6" fill="none" stroke="#6e6e6e" stroke-width="3.8" stroke-linecap="round" stroke-linejoin="round"/><circle cx="178.8" cy="-2.1" r="3.1" fill="#6e6e6e"/><circle cx="178.8" cy="7.6" r="3.1" fill="#6e6e6e"/></g>
<text x="230" y="1455.1" font-size="30" letter-spacing="0.1" fill="#505050">44-1 Horn Cigar Lighter</text>
<path d="M148.9,1494.8 L159.6,1505.2 L148.9,1516.0" fill="none" stroke="#6e6e6e" stroke-width="2.8" stroke-linecap="round" stroke-linejoin="round"/>
<g transform="translate(32,1514.3)"><path d="M154,8.5 V-25.3 H173.9 V-16.5 H164 V-1 Z" fill="#dedede" stroke="none"/><path d="M161.8,-0.8 L153.9,8.7 V-22.5 Q153.9,-25.4 156.8,-25.4 H171 Q173.9,-25.4 173.9,-22.5 V-16.6" fill="none" stroke="#6e6e6e" stroke-width="3.7" stroke-linejoin="round"/><circle cx="166.5" cy="-12.4" r="3.1" fill="#6e6e6e"/><path d="M172.8,-11.3 H183.2" stroke="#6e6e6e" stroke-width="3.6" stroke-linecap="round"/><path d="M166.5,-7 V8.7 H173.6 M166.5,-1.7 H173.6" fill="none" stroke="#6e6e6e" stroke-width="3.8" stroke-linecap="round" stroke-linejoin="round"/><circle cx="178.8" cy="-2.1" r="3.1" fill="#6e6e6e"/><circle cx="178.8" cy="7.6" r="3.1" fill="#6e6e6e"/></g>
<text x="230" y="1515.1" font-size="30" letter-spacing="0.1" fill="#505050">46-1 Air Bags</text>
<path d="M148.9,1554.8 L159.6,1565.2 L148.9,1576.0" fill="none" stroke="#6e6e6e" stroke-width="2.8" stroke-linecap="round" stroke-linejoin="round"/>
<g transform="translate(32,1574.3)"><path d="M154,8.5 V-25.3 H173.9 V-16.5 H164 V-1 Z" fill="#dedede" stroke="none"/><path d="M161.8,-0.8 L153.9,8.7 V-22.5 Q153.9,-25.4 156.8,-25.4 H171 Q173.9,-25.4 173.9,-22.5 V-16.6" fill="none" stroke="#6e6e6e" stroke-width="3.7" stroke-linejoin="round"/><circle cx="166.5" cy="-12.4" r="3.1" fill="#6e6e6e"/><path d="M172.8,-11.3 H183.2" stroke="#6e6e6e" stroke-width="3.6" stroke-linecap="round"/><path d="M166.5,-7 V8.7 H173.6 M166.5,-1.7 H173.6" fill="none" stroke="#6e6e6e" stroke-width="3.8" stroke-linecap="round" stroke-linejoin="round"/><circle cx="178.8" cy="-2.1" r="3.1" fill="#6e6e6e"/><circle cx="178.8" cy="7.6" r="3.1" fill="#6e6e6e"/></g>
<text x="230" y="1575.1" font-size="30" letter-spacing="0.1" fill="#505050">54-1 Air Conditioner Heater</text>
<path d="M148.9,1614.8 L159.6,1625.2 L148.9,1636.0" fill="none" stroke="#6e6e6e" stroke-width="2.8" stroke-linecap="round" stroke-linejoin="round"/>
<g transform="translate(32,1634.3)"><path d="M154,8.5 V-25.3 H173.9 V-16.5 H164 V-1 Z" fill="#dedede" stroke="none"/><path d="M161.8,-0.8 L153.9,8.7 V-22.5 Q153.9,-25.4 156.8,-25.4 H171 Q173.9,-25.4 173.9,-22.5 V-16.6" fill="none" stroke="#6e6e6e" stroke-width="3.7" stroke-linejoin="round"/><circle cx="166.5" cy="-12.4" r="3.1" fill="#6e6e6e"/><path d="M172.8,-11.3 H183.2" stroke="#6e6e6e" stroke-width="3.6" stroke-linecap="round"/><path d="M166.5,-7 V8.7 H173.6 M166.5,-1.7 H173.6" fill="none" stroke="#6e6e6e" stroke-width="3.8" stroke-linecap="round" stroke-linejoin="round"/><circle cx="178.8" cy="-2.1" r="3.1" fill="#6e6e6e"/><circle cx="178.8" cy="7.6" r="3.1" fill="#6e6e6e"/></g>
<text x="230" y="1635.1" font-size="30" letter-spacing="0.1" fill="#505050">55-1 EATC</text>
</g>
<rect x="867" y="277" width="33" height="33" fill="#f0f0f0"/>
<path d="M878,297.5 L883.5,292 L889,297.5" fill="none" stroke="#4a4a4a" stroke-width="2.6"/>
<rect x="867" y="311" width="32" height="558" fill="#cdcdcd"/>
<rect x="867" y="869" width="32" height="749" fill="#f0f0f0"/>
<path d="M934,879 V900 L923.5,889.5 Z" fill="#6e6e6e"/>
</svg>
<!--DOC-->
<svg width="2730" height="1618" style="left:0;top:0" font-family="Liberation Sans, sans-serif" fill="#1e1b1c">
<text x="1144" y="163" font-size="29" font-weight="bold" letter-spacing="0.2">13<tspan dx="3">-1</tspan></text>
<text x="1252.5" y="163" font-size="29" font-weight="bold">Power Distribution</text>
<line x1="1113" y1="178.3" x2="2661" y2="178.3" stroke="#1e1b1c" stroke-width="1.5" stroke-linecap="butt"/>
<text x="1120.5" y="254.8" font-size="24" font-weight="bold">F2.02</text>
<line x1="1113" y1="1389.2" x2="2659" y2="1389.2" stroke="#1e1b1c" stroke-width="1.6" stroke-linecap="butt"/>
<text x="1118" y="1424" font-size="24.2">F-150 ’04</text>
<rect x="949" y="1476.5" width="1781" height="7" fill="#9b9b9b"/>
<text x="2331" y="1553.2" font-size="29" font-weight="bold">Power Distribution</text>
<text x="2644.5" y="1553.2" font-size="29" font-weight="bold">13<tspan dx="3">-2</tspan></text>
<line x1="1193" y1="1568.5" x2="2730" y2="1568.5" stroke="#1e1b1c" stroke-width="1.8" stroke-linecap="butt"/>
<line x1="1246" y1="297.8" x2="2216" y2="297.8" stroke="#1e1b1c" stroke-width="2.3" stroke-linecap="butt"/>
<rect x="1226" y="302" width="40" height="88.7" fill="none" stroke="#1e1b1c" stroke-width="4"/>
<line x1="1245.7" y1="302" x2="1245.7" y2="311.8" stroke="#1e1b1c" stroke-width="1.8" stroke-linecap="butt"/>
<line x1="1238" y1="311.8" x2="1254" y2="311.8" stroke="#1e1b1c" stroke-width="2.2" stroke-linecap="butt"/>
<line x1="1238" y1="324" x2="1254" y2="324" stroke="#1e1b1c" stroke-width="2.2" stroke-linecap="butt"/>
<line x1="1238" y1="336.9" x2="1254" y2="336.9" stroke="#1e1b1c" stroke-width="2.2" stroke-linecap="butt"/>
<line x1="1238" y1="349.8" x2="1254" y2="349.8" stroke="#1e1b1c" stroke-width="2.2" stroke-linecap="butt"/>
<line x1="1238" y1="362" x2="1254" y2="362" stroke="#1e1b1c" stroke-width="2.2" stroke-linecap="butt"/>
<line x1="1238" y1="374.9" x2="1254" y2="374.9" stroke="#1e1b1c" stroke-width="2.2" stroke-linecap="butt"/>
<line x1="1242" y1="317.9" x2="1249" y2="317.9" stroke="#1e1b1c" stroke-width="2.2" stroke-linecap="butt"/>
<line x1="1242" y1="330.8" x2="1249" y2="330.8" stroke="#1e1b1c" stroke-width="2.2" stroke-linecap="butt"/>
<line x1="1242" y1="343" x2="1249" y2="343" stroke="#1e1b1c" stroke-width="2.2" stroke-linecap="butt"/>
<line x1="1242" y1="355.9" x2="1249" y2="355.9" stroke="#1e1b1c" stroke-width="2.2" stroke-linecap="butt"/>
<line x1="1242" y1="368.8" x2="1249" y2="368.8" stroke="#1e1b1c" stroke-width="2.2" stroke-linecap="butt"/>
<line x1="1242" y1="380.9" x2="1249" y2="380.9" stroke="#1e1b1c" stroke-width="2.2" stroke-linecap="butt"/>
<line x1="1245.7" y1="380.9" x2="1245.7" y2="390" stroke="#1e1b1c" stroke-width="1.8" stroke-linecap="butt"/>
<line x1="1255.5" y1="308.8" x2="1261.5" y2="308.8" stroke="#1e1b1c" stroke-width="1.6" stroke-linecap="butt"/>
<line x1="1258.5" y1="305.8" x2="1258.5" y2="311.8" stroke="#1e1b1c" stroke-width="1.6" stroke-linecap="butt"/>
<line x1="1254.8" y1="385" x2="1261" y2="385" stroke="#1e1b1c" stroke-width="1.6" stroke-linecap="butt"/>
<circle cx="1245.7" cy="297.7" r="3.4" fill="#fff" stroke="#1e1b1c" stroke-width="1.5"/>
<circle cx="1245.7" cy="394.7" r="3.2" fill="#fff" stroke="#1e1b1c" stroke-width="1.5"/>
<text x="1275" y="315.7" font-size="15.6" font-weight="bold">Battery (10655)</text>
<text x="1275.5" y="335.4" font-size="15.6" font-weight="bold" font-style="italic">151–3</text>
<text x="1277.5" y="403" font-size="15.7">C1100c</text>
<line x1="1277" y1="409" x2="1331" y2="409" stroke="#1e1b1c" stroke-width="1.6" stroke-linecap="butt"/>
<path d="M1245.7,397.5 V569" fill="none" stroke="#1e1b1c" stroke-width="6.2" stroke-linejoin="miter" stroke-linecap="butt"/>
<path d="M1248,397.5 L1284.5,433 H1344.4 V569" fill="none" stroke="#1e1b1c" stroke-width="6.2" stroke-linejoin="miter" stroke-linecap="butt"/>
<path d="M1164.3,568.6 V540.5 H1211.5 L1245.7,574" fill="none" stroke="#1e1b1c" stroke-width="6.2" stroke-linejoin="miter" stroke-linecap="butt"/>
<circle cx="1164.3" cy="575.5" r="3.9" fill="#1e1b1c"/>
<line x1="1157.1" y1="579.8" x2="1171.5" y2="579.8" stroke="#1e1b1c" stroke-width="1.9" stroke-linecap="butt"/>
<line x1="1159.1" y1="583.3" x2="1169.5" y2="583.3" stroke="#1e1b1c" stroke-width="1.9" stroke-linecap="butt"/>
<line x1="1161.2" y1="587" x2="1167.3999999999999" y2="587" stroke="#1e1b1c" stroke-width="1.9" stroke-linecap="butt"/>
<circle cx="1245.7" cy="575.5" r="3.9" fill="#1e1b1c"/>
<line x1="1238.5" y1="579.8" x2="1252.9" y2="579.8" stroke="#1e1b1c" stroke-width="1.9" stroke-linecap="butt"/>
<line x1="1240.5" y1="583.3" x2="1250.9" y2="583.3" stroke="#1e1b1c" stroke-width="1.9" stroke-linecap="butt"/>
<line x1="1242.6000000000001" y1="587" x2="1248.8" y2="587" stroke="#1e1b1c" stroke-width="1.9" stroke-linecap="butt"/>
<circle cx="1344.4" cy="575.5" r="3.9" fill="#1e1b1c"/>
<line x1="1337.2" y1="579.8" x2="1351.6000000000001" y2="579.8" stroke="#1e1b1c" stroke-width="1.9" stroke-linecap="butt"/>
<line x1="1339.2" y1="583.3" x2="1349.6000000000001" y2="583.3" stroke="#1e1b1c" stroke-width="1.9" stroke-linecap="butt"/>
<line x1="1341.3000000000002" y1="587" x2="1347.5" y2="587" stroke="#1e1b1c" stroke-width="1.9" stroke-linecap="butt"/>
<text x="1236.9" y="470.8" font-size="15.7" text-anchor="end">2057</text>
<text x="1258.0" y="470.8" font-size="15.7">BK</text>
<text x="1334.9" y="514.4" font-size="15.7" text-anchor="end">2057</text>
<text x="1355.0" y="514.4" font-size="15.7">BK</text>
<text x="1154.9" y="562" font-size="15.7" text-anchor="end">2057</text>
<text x="1176.0" y="562" font-size="15.7">BK</text>
<text x="1179.5" y="583" font-size="15.7">G101</text>
<line x1="1179" y1="588.7" x2="1219" y2="588.7" stroke="#1e1b1c" stroke-width="1.6" stroke-linecap="butt"/>
<text x="1181" y="603" font-size="15.6" font-weight="bold" font-style="italic">151–3</text>
<text x="1258.5" y="583" font-size="15.7">G100</text>
<line x1="1258" y1="588.7" x2="1298" y2="588.7" stroke="#1e1b1c" stroke-width="1.6" stroke-linecap="butt"/>
<text x="1259.5" y="603" font-size="15.6" font-weight="bold" font-style="italic">151–5,</text>
<text x="1259.5" y="626.6" font-size="15.6" font-weight="bold" font-style="italic">151–7</text>
<text x="1356.5" y="583" font-size="15.7">G105</text>
<line x1="1356" y1="588.7" x2="1396" y2="588.7" stroke="#1e1b1c" stroke-width="1.6" stroke-linecap="butt"/>
<text x="1357.5" y="603" font-size="15.6" font-weight="bold" font-style="italic">151–1</text>
<circle cx="1457.2" cy="297.8" r="3.4" fill="#fff" stroke="#1e1b1c" stroke-width="1.5"/>
<path d="M1457.2,301 V852.5" fill="none" stroke="#1e1b1c" stroke-width="6.2" stroke-linejoin="miter" stroke-linecap="butt"/>
<circle cx="1457.2" cy="855.3" r="3.2" fill="#fff" stroke="#1e1b1c" stroke-width="1.5"/>
<text x="1469.5" y="317" font-size="15.7">C1100a</text>
<line x1="1469" y1="321.8" x2="1524.5" y2="321.8" stroke="#1e1b1c" stroke-width="1.6" stroke-linecap="butt"/>
<text x="1445.9" y="366" font-size="15.7" text-anchor="end">2037</text>
<text x="1469.0" y="366" font-size="15.7">RD</text>
<text x="1470.5" y="842.5" font-size="15.7">C197a</text>
<line x1="1469.5" y1="848" x2="1517" y2="848" stroke="#1e1b1c" stroke-width="1.6" stroke-linecap="butt"/>
<rect x="1424.7" y="860.6" width="71.6000000000001" height="70.49999999999996" fill="none" stroke="#1e1b1c" stroke-width="3.8" stroke-dasharray="20.3,3.3" stroke-dashoffset="8.5" stroke-linecap="butt" stroke-linejoin="miter"/>
<text x="1506" y="869.5" font-size="15.6" font-weight="bold">Starter motor</text>
<text x="1506" y="889.3" font-size="15.6" font-weight="bold">(11000)</text>
<text x="1506" y="909.3" font-size="15.6" font-weight="bold" font-style="italic">20–1</text>
<circle cx="1649.7" cy="297.8" r="3.4" fill="#fff" stroke="#1e1b1c" stroke-width="1.5"/>
<path d="M1649.7,301 V384" fill="none" stroke="#1e1b1c" stroke-width="6.2" stroke-linejoin="miter" stroke-linecap="butt"/>
<circle cx="1649.7" cy="392.7" r="4.1" fill="#1e1b1c"/>
<text x="1661.5" y="317" font-size="15.7">C1100b</text>
<line x1="1661" y1="321.8" x2="1715.5" y2="321.8" stroke="#1e1b1c" stroke-width="1.6" stroke-linecap="butt"/>
<text x="1637.9" y="366" font-size="15.7" text-anchor="end">38</text>
<text x="1660.0" y="366" font-size="15.7">BK/OG</text>
<line x1="1657" y1="392.8" x2="1814" y2="392.8" stroke="#1e1b1c" stroke-width="2.2" stroke-linecap="butt"/>
<path d="M1649.7,400.5 V463.3" fill="none" stroke="#1e1b1c" stroke-width="6.2" stroke-linejoin="miter" stroke-linecap="butt"/>
<text x="1637.9" y="437.7" font-size="15.7" text-anchor="end">290</text>
<text x="1660.0" y="437.7" font-size="15.7">GY</text>
<circle cx="1649.7" cy="474" r="5.4" fill="#1e1b1c"/>
<line x1="1649.7" y1="474" x2="1649.7" y2="486.8" stroke="#1e1b1c" stroke-width="1.6" stroke-linecap="butt"/>
<rect x="1645.65" y="486.8" width="8.1" height="84.19999999999999" fill="#fff" stroke="#1e1b1c" stroke-width="1.7"/>
<line x1="1649.7" y1="571" x2="1649.7" y2="584" stroke="#1e1b1c" stroke-width="1.6" stroke-linecap="butt"/>
<circle cx="1649.7" cy="584" r="5.4" fill="#1e1b1c"/>
<path d="M1649.7,594 V653.3" fill="none" stroke="#1e1b1c" stroke-width="6.2" stroke-linejoin="miter" stroke-linecap="butt"/>
<circle cx="1649.7" cy="659.6" r="4.1" fill="#1e1b1c"/>
<line x1="1656.5" y1="659.8" x2="1970" y2="659.8" stroke="#1e1b1c" stroke-width="2.2" stroke-linecap="butt"/>
<text x="1666" y="499.7" font-size="15.6" font-weight="bold">Fusible link A</text>
<text x="1666" y="520.2" font-size="15.6" font-weight="bold">1)</text>
<text x="1696" y="520.2" font-size="15.6" font-weight="bold">12 gauge</text>
<text x="1666" y="540.7" font-size="15.6" font-weight="bold">2)</text>
<text x="1696" y="540.7" font-size="15.6" font-weight="bold">Gray</text>
<text x="1666" y="561.2" font-size="15.6" font-weight="bold" font-style="italic">151–3</text>
<circle cx="1821.5" cy="392.8" r="4.1" fill="#1e1b1c"/>
<text x="1831.5" y="398.8" font-size="15.7">S119</text>
<line x1="1831" y1="404" x2="1867" y2="404" stroke="#1e1b1c" stroke-width="1.6" stroke-linecap="butt"/>
<path d="M1821.5,399 V463.5" fill="none" stroke="#1e1b1c" stroke-width="6.2" stroke-linejoin="miter" stroke-linecap="butt"/>
<text x="1813.9" y="437.6" font-size="15.7" text-anchor="end">290</text>
<text x="1831.0" y="437.6" font-size="15.7">GY</text>
<circle cx="1821.5" cy="474" r="5.4" fill="#1e1b1c"/>
<line x1="1821.5" y1="474" x2="1821.5" y2="486.8" stroke="#1e1b1c" stroke-width="1.6" stroke-linecap="butt"/>
<rect x="1817.45" y="486.8" width="8.1" height="84.19999999999999" fill="#fff" stroke="#1e1b1c" stroke-width="1.7"/>
<line x1="1821.5" y1="571" x2="1821.5" y2="584.3" stroke="#1e1b1c" stroke-width="1.6" stroke-linecap="butt"/>
<circle cx="1821.5" cy="584.3" r="5.4" fill="#1e1b1c"/>
<path d="M1821.5,594 V652.2" fill="none" stroke="#1e1b1c" stroke-width="6.2" stroke-linejoin="miter" stroke-linecap="butt"/>
<circle cx="1821.5" cy="659.8" r="4.1" fill="#1e1b1c"/>
<path d="M1821.5,667.2 V1128.5" fill="none" stroke="#1e1b1c" stroke-width="6.2" stroke-linejoin="miter" stroke-linecap="butt"/>
<text x="1839" y="499" font-size="15.6" font-weight="bold">Fusible link B</text>
<text x="1839" y="519.5" font-size="15.6" font-weight="bold">1)</text>
<text x="1869" y="519.5" font-size="15.6" font-weight="bold">12 gauge</text>
<text x="1839" y="540.0" font-size="15.6" font-weight="bold">2)</text>
<text x="1869" y="540.0" font-size="15.6" font-weight="bold">Gray</text>
<text x="1839" y="560.5" font-size="15.6" font-weight="bold" font-style="italic">151–3</text>
<text x="1814.4" y="712.3" font-size="15.7" text-anchor="end">38</text>
<text x="1830.5" y="712.3" font-size="15.7">BK/OG</text>
<path d="M1815.9,1133.2 Q1821.5,1126.2 1827.1,1133.2" fill="none" stroke="#1e1b1c" stroke-width="3.0" stroke-linejoin="round" stroke-linecap="butt"/>
<line x1="1821.5" y1="1128.8" x2="1821.5" y2="1137.8" stroke="#1e1b1c" stroke-width="2.2" stroke-linecap="butt"/>
<text x="1812" y="1125.8" font-size="15.7" text-anchor="end">1</text>
<text x="1831.5" y="1125.8" font-size="15.7">C102b</text>
<line x1="1831" y1="1131.5" x2="1878" y2="1131.5" stroke="#1e1b1c" stroke-width="1.6" stroke-linecap="butt"/>
<circle cx="1976.8" cy="659.8" r="4.1" fill="#1e1b1c"/>
<text x="1985.5" y="666" font-size="15.7">S120</text>
<line x1="1985.5" y1="671.6" x2="2024" y2="671.6" stroke="#1e1b1c" stroke-width="1.6" stroke-linecap="butt"/>
<path d="M1976.8,667 V727.4" fill="none" stroke="#1e1b1c" stroke-width="6.2" stroke-linejoin="miter" stroke-linecap="butt"/>
<text x="1967.9" y="712.3" font-size="15.7" text-anchor="end">292</text>
<text x="1985.6" y="712.3" font-size="15.7">BN</text>
<circle cx="1976.8" cy="738.2" r="5.4" fill="#1e1b1c"/>
<line x1="1976.8" y1="738.2" x2="1976.8" y2="750.5" stroke="#1e1b1c" stroke-width="1.6" stroke-linecap="butt"/>
<rect x="1972.3" y="750.5" width="9" height="84.29999999999995" fill="#fff" stroke="#1e1b1c" stroke-width="1.7"/>
<line x1="1976.8" y1="834.8" x2="1976.8" y2="847.7" stroke="#1e1b1c" stroke-width="1.6" stroke-linecap="butt"/>
<circle cx="1976.8" cy="847.7" r="5.4" fill="#1e1b1c"/>
<path d="M1976.8,857.8 V889.5" fill="none" stroke="#1e1b1c" stroke-width="6.2" stroke-linejoin="miter" stroke-linecap="butt"/>
<circle cx="1976.8" cy="896.6" r="4.1" fill="#1e1b1c"/>
<path d="M1976.8,903.7 V1128.5" fill="none" stroke="#1e1b1c" stroke-width="6.2" stroke-linejoin="miter" stroke-linecap="butt"/>
<text x="1985.5" y="900" font-size="15.7">S121</text>
<line x1="1985.5" y1="905.9" x2="2024" y2="905.9" stroke="#1e1b1c" stroke-width="1.6" stroke-linecap="butt"/>
<text x="1989.5" y="762" font-size="15.6" font-weight="bold">Fusible link C</text>
<text x="1989.5" y="782.7" font-size="15.6" font-weight="bold">1)</text>
<text x="2019.5" y="782.7" font-size="15.6" font-weight="bold">18 gauge</text>
<text x="1989.5" y="803.4" font-size="15.6" font-weight="bold">2)</text>
<text x="2019.5" y="803.4" font-size="15.6" font-weight="bold">Brown</text>
<text x="1989.5" y="824.1" font-size="15.6" font-weight="bold" font-style="italic">151–3</text>
<text x="1967.9" y="1058.7" font-size="15.7" text-anchor="end">35</text>
<text x="1985.4" y="1058.7" font-size="15.7">OG/LB</text>
<path d="M1971.2,1133.2 Q1976.8,1126.2 1982.3999999999999,1133.2" fill="none" stroke="#1e1b1c" stroke-width="3.0" stroke-linejoin="round" stroke-linecap="butt"/>
<line x1="1976.8" y1="1128.8" x2="1976.8" y2="1137.8" stroke="#1e1b1c" stroke-width="2.2" stroke-linecap="butt"/>
<text x="1967.5" y="1125.8" font-size="15.7" text-anchor="end">3</text>
<text x="1986" y="1125.8" font-size="15.7">C102a</text>
<line x1="1986" y1="1131.5" x2="2034" y2="1131.5" stroke="#1e1b1c" stroke-width="1.6" stroke-linecap="butt"/>
<rect x="1785.3" y="1137.3999999999999" width="252.9" height="70.8000000000001" fill="none" stroke="#1e1b1c" stroke-width="3.6" stroke-dasharray="20.3,3.3" stroke-dashoffset="8.5" stroke-linecap="butt" stroke-linejoin="miter"/>
<text x="1812" y="1158.4" font-size="15.7">B+</text>
<text x="1965.5" y="1158.4" font-size="15.7">AS</text>
<text x="2046" y="1149" font-size="15.6" font-weight="bold">Generator</text>
<text x="2046" y="1169.5" font-size="15.6" font-weight="bold">(10346)</text>
<text x="2046" y="1188.8" font-size="15.6" font-weight="bold" font-style="italic">12–1</text>
<circle cx="2216.2" cy="297.9" r="3.4" fill="#fff" stroke="#1e1b1c" stroke-width="1.5"/>
<path d="M2216.2,301 V432.5" fill="none" stroke="#1e1b1c" stroke-width="6.2" stroke-linejoin="miter" stroke-linecap="butt"/>
<text x="2225.5" y="303.4" font-size="15.7">C1100d</text>
<line x1="2225" y1="308.6" x2="2279" y2="308.6" stroke="#1e1b1c" stroke-width="1.6" stroke-linecap="butt"/>
<text x="2204.9" y="366" font-size="15.7" text-anchor="end">1119</text>
<text x="2224.0" y="366" font-size="15.7">RD</text>
<text x="2204" y="425.5" font-size="15.7" text-anchor="end">1</text>
<text x="2225" y="425.5" font-size="15.7">C270p</text>
<line x1="2225" y1="430.5" x2="2272" y2="430.5" stroke="#1e1b1c" stroke-width="1.6" stroke-linecap="butt"/>
<rect x="2175.9" y="439.5" width="355.7999999999999" height="150.09999999999997" fill="none" stroke="#1e1b1c" stroke-width="3.8" stroke-dasharray="20.3,3.3" stroke-dashoffset="8.5" stroke-linecap="butt" stroke-linejoin="miter"/>
<line x1="2216.2" y1="436" x2="2216.2" y2="591" stroke="#1e1b1c" stroke-width="1.7" stroke-linecap="butt"/>
<circle cx="2216.2" cy="435.8" r="3.2" fill="#fff" stroke="#1e1b1c" stroke-width="1.5"/>
<text x="2231" y="467.4" font-size="15.5">Hot at all times</text>
<path d="M2201.5,480.6 H2391 L2400.5,486.3 L2391,492 H2201.5 Z" fill="#1e1b1c"/>
<path d="M2207,484.2 H2391 L2395.5,486.3 L2391,488.5 H2207 L2210,486.3 Z" fill="#fff"/>
<text x="2418.5" y="480.5" font-size="15.5">See page</text>
<text x="2418.5" y="498" font-size="15.5">13–2</text>
<circle cx="2216.2" cy="526.3" r="3.4" fill="#1e1b1c"/>
<rect x="2207.8" y="529.5" width="17" height="30" fill="#fff" stroke="#1e1b1c" stroke-width="1.6"/>
<path d="M2216.2,530 C2222,536 2210.5,541 2216.2,545.5 C2222,550 2210.5,554 2216.2,559" fill="none" stroke="#1e1b1c" stroke-width="1.6" stroke-linejoin="miter" stroke-linecap="butt"/>
<text x="2234.5" y="541.6" font-size="15.7">F2.02</text>
<line x1="2234" y1="546.4" x2="2275" y2="546.4" stroke="#1e1b1c" stroke-width="1.6" stroke-linecap="butt"/>
<text x="2234.5" y="561.3" font-size="15.7">20A</text>
<text x="2542" y="448.4" font-size="15.6" font-weight="bold">Central</text>
<text x="2542" y="468.3" font-size="15.6" font-weight="bold">Junction</text>
<text x="2542" y="489" font-size="15.6" font-weight="bold">Box (CJB)</text>
<text x="2542" y="509" font-size="15.6" font-weight="bold">(14A067)</text>
<text x="2542" y="529.3" font-size="15.6" font-weight="bold" font-style="italic">151–12</text>
<path d="M2210.7,594.8 L2216.2,598.8 L2221.7,594.8" fill="none" stroke="#1e1b1c" stroke-width="3.0" stroke-linejoin="round" stroke-linecap="butt"/>
<path d="M2216.2,597.5 V734" fill="none" stroke="#1e1b1c" stroke-width="6.2" stroke-linejoin="miter" stroke-linecap="butt"/>
<text x="2204" y="608.7" font-size="15.7" text-anchor="end">3</text>
<text x="2225" y="608.7" font-size="15.7">C270f</text>
<line x1="2225" y1="614.5" x2="2268" y2="614.5" stroke="#1e1b1c" stroke-width="1.6" stroke-linecap="butt"/>
<text x="2204.9" y="713.2" font-size="15.7" text-anchor="end">10</text>
<text x="2224.0" y="713.2" font-size="15.7">LG/RD</text>
<circle cx="2216.2" cy="741.6" r="4.1" fill="#1e1b1c"/>
<line x1="2223.5" y1="741.8" x2="2461" y2="741.8" stroke="#1e1b1c" stroke-width="2.2" stroke-linecap="butt"/>
<circle cx="2468.4" cy="741.6" r="4.1" fill="#1e1b1c"/>
<text x="2478" y="747" font-size="15.7">S220</text>
<line x1="2477.5" y1="752" x2="2515.5" y2="752" stroke="#1e1b1c" stroke-width="1.6" stroke-linecap="butt"/>
<path d="M2216.2,749 V866" fill="none" stroke="#1e1b1c" stroke-width="6.2" stroke-linejoin="miter" stroke-linecap="butt"/>
<text x="2204.9" y="796" font-size="15.7" text-anchor="end">10</text>
<text x="2224.0" y="796" font-size="15.7">LG/RD</text>
<path d="M2210.6,873.1999999999999 Q2216.2,866.1999999999999 2221.7999999999997,873.1999999999999" fill="none" stroke="#1e1b1c" stroke-width="3.0" stroke-linejoin="round" stroke-linecap="butt"/>
<line x1="2216.2" y1="868.8" x2="2216.2" y2="877.8" stroke="#1e1b1c" stroke-width="2.2" stroke-linecap="butt"/>
<text x="2204" y="863.8" font-size="15.7" text-anchor="end">3</text>
<text x="2225" y="863.8" font-size="15.7">C214</text>
<line x1="2225" y1="869.6" x2="2263" y2="869.6" stroke="#1e1b1c" stroke-width="1.6" stroke-linecap="butt"/>
<path d="M2216.2,878.3 V1128.5" fill="none" stroke="#1e1b1c" stroke-width="6.2" stroke-linejoin="miter" stroke-linecap="butt"/>
<text x="2204.9" y="1059" font-size="15.7" text-anchor="end">10</text>
<text x="2224.4" y="1059" font-size="15.7">LG/RD</text>
<path d="M2210.6,1133.2 Q2216.2,1126.2 2221.7999999999997,1133.2" fill="none" stroke="#1e1b1c" stroke-width="3.0" stroke-linejoin="round" stroke-linecap="butt"/>
<line x1="2216.2" y1="1128.8" x2="2216.2" y2="1137.8" stroke="#1e1b1c" stroke-width="2.2" stroke-linecap="butt"/>
<text x="2204" y="1125.5" font-size="15.7" text-anchor="end">1</text>
<text x="2225" y="1125.5" font-size="15.7">C278</text>
<line x1="2225" y1="1131.5" x2="2263" y2="1131.5" stroke="#1e1b1c" stroke-width="1.6" stroke-linecap="butt"/>
<rect x="2184.6000000000004" y="1138.1" width="71.19999999999973" height="69.50000000000014" fill="none" stroke="#1e1b1c" stroke-width="3.6" stroke-dasharray="20.3,3.3" stroke-dashoffset="8.5" stroke-linecap="butt" stroke-linejoin="miter"/>
<text x="2266" y="1146.3" font-size="15.6" font-weight="bold">Brake pedal</text>
<text x="2266" y="1167.5" font-size="15.6" font-weight="bold">position switch</text>
<text x="2266" y="1187" font-size="15.6" font-weight="bold">(13480)</text>
<text x="2266" y="1207" font-size="15.6" font-weight="bold" font-style="italic">31–1, 90–3</text>
<path d="M2468.4,748.5 V1128.5" fill="none" stroke="#1e1b1c" stroke-width="6.2" stroke-linejoin="miter" stroke-linecap="butt"/>
<text x="2456.9" y="1059" font-size="15.7" text-anchor="end">10</text>
<text x="2476.8" y="1059" font-size="15.7">LG/RD</text>
<path d="M2462.8,1133.2 Q2468.4,1126.2 2474.0,1133.2" fill="none" stroke="#1e1b1c" stroke-width="3.0" stroke-linejoin="round" stroke-linecap="butt"/>
<line x1="2468.4" y1="1128.8" x2="2468.4" y2="1137.8" stroke="#1e1b1c" stroke-width="2.2" stroke-linecap="butt"/>
<text x="2456.5" y="1125.5" font-size="15.7" text-anchor="end">85</text>
<text x="2478" y="1125.5" font-size="15.7">C2047</text>
<line x1="2477.5" y1="1131.5" x2="2524" y2="1131.5" stroke="#1e1b1c" stroke-width="1.6" stroke-linecap="butt"/>
<rect x="2435.8" y="1138.1" width="71.4" height="69.50000000000014" fill="none" stroke="#1e1b1c" stroke-width="3.6" stroke-dasharray="20.3,3.3" stroke-dashoffset="8.5" stroke-linecap="butt" stroke-linejoin="miter"/>
<text x="2522" y="1146.3" font-size="15.6" font-weight="bold">Indicator flasher</text>
<text x="2522" y="1167.5" font-size="15.6" font-weight="bold">relay (13350)</text>
<text x="2522" y="1187" font-size="15.6" font-weight="bold" font-style="italic">90–1</text>
</svg>
</body></html>
